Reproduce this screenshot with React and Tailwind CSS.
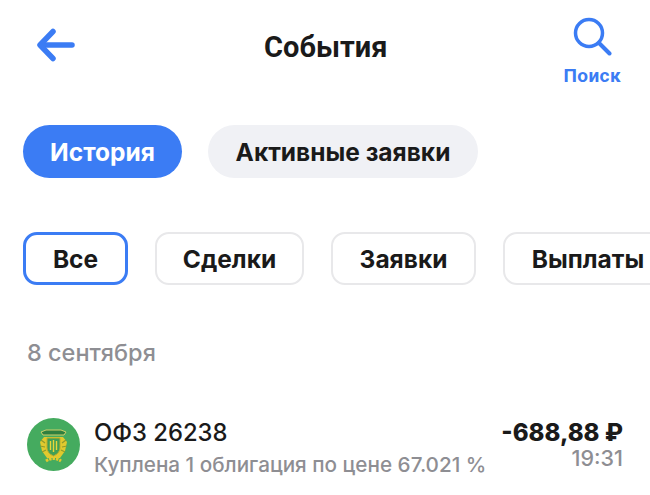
import { useState } from 'react';

const filters = [
  { label: 'Все', width: 'w-[105px]' },
  { label: 'Сделки', width: 'w-[149px]' },
  { label: 'Заявки', width: 'w-[145px]' },
  { label: 'Выплаты', width: 'w-[170px]' },
];

function BondLogo() {
  return (
    <svg width="53" height="53" viewBox="0 0 53 53" className="shrink-0">
      <circle cx="26.5" cy="26.5" r="26.5" fill="#45ab5f" />
      {/* crest */}
      <path d="M14 14 L19 12 H34 L39 14 L37 17 H16 Z" fill="#2f7f3f" stroke="#cfd06a" strokeWidth="1" />
      <path d="M17 19 H36 L40 24 L38 33 L33 40 H20 L15 33 L13 24 Z" fill="#e0c92e" />
      <path d="M14 22 L18 25 M13 28 L18 29 M15 34 L19 32 M39 22 L35 25 M40 28 L35 29 M38 34 L34 32" stroke="#8f9a2c" strokeWidth="1.2" />
      <path d="M20 20 H33 V30 Q33 35 26.5 38 Q20 35 20 30 Z" fill="#3f9f55" stroke="#b9ad2c" strokeWidth="1" />
      <path d="M23.5 23 V32 M26.5 22 V34 M29.5 23 V32" stroke="#e8d63a" strokeWidth="1.4" />
      <path d="M19 43 Q26.5 38 34 43" fill="none" stroke="#e0c92e" strokeWidth="3" strokeDasharray="2.5 1" />
    </svg>
  );
}

export default function App() {
  const [activeFilter, setActiveFilter] = useState('Все');

  return (
    <div className="w-[650px] h-[495px] overflow-hidden bg-white font-['Inter',sans-serif] text-[#1a1a1a]">
      {/* Header */}
      <div className="flex items-start justify-between h-[125px] pl-[36px] pr-[29px]">
        <button className="mt-[28px] text-[#3b7cf4]">
          <svg width="40" height="34" viewBox="0 0 40 34" fill="none" stroke="currentColor" strokeWidth="5.5" strokeLinecap="round" strokeLinejoin="round">
            <path d="M36 17 H5" />
            <path d="M17 3.5 L4 17 L17 30.5" />
          </svg>
        </button>
        <h1 className="mt-[29px] ml-[12px] font-['Roboto',sans-serif] text-[29px] leading-[36px] font-bold">События</h1>
        <button className="mt-[17px] flex flex-col items-center text-[#3b7cf4]">
          <svg width="40" height="39" viewBox="0 0 40 39" fill="none" stroke="currentColor" strokeWidth="3.5" strokeLinecap="round" className="translate-x-[1px]">
            <circle cx="16" cy="16" r="13.5" />
            <path d="M26 26 L36.5 36.5" strokeWidth="4" />
          </svg>
          <span className="mt-[10px] font-['Roboto',sans-serif] text-[19px] leading-[20px] font-bold tracking-[0.4px]">Поиск</span>
        </button>
      </div>

      {/* Tabs */}
      <div className="flex gap-[26px] pl-[23px]">
        <div className="flex items-center justify-center w-[159px] h-[53px] pt-[2px] rounded-full bg-[#3b7cf4] text-white text-[24.5px] font-bold">История</div>
        <div className="flex items-center justify-center w-[270px] h-[53px] pt-[2px] rounded-full bg-[#f0f1f5] text-[24.5px] font-bold">Активные заявки</div>
      </div>

      {/* Filters */}
      <div className="flex gap-[27px] mt-[54px] pl-[23px]">
        {filters.map((f) => (
          <button
            key={f.label}
            onClick={() => setActiveFilter(f.label)}
            className={`flex items-center justify-center shrink-0 h-[53px] pt-[2px] rounded-[14px] text-[24.5px] font-bold ${f.width} ${
              activeFilter === f.label ? 'border-[3px] border-[#3b7cf4]' : 'border-2 border-[#e8e8ea]'
            }`}
          >
            {f.label}
          </button>
        ))}
      </div>

      {/* Date */}
      <div className="mt-[54px] pl-[27px] text-[23.5px] leading-[28px] font-medium text-[#8e8e93]">8 сентября</div>

      {/* Operation row */}
      <div className="flex mt-[51px] pl-[27px] pr-[27px]">
        <BondLogo />
        <div className="ml-[14px] min-w-0">
          <div className="text-[23.8px] leading-[30px] font-medium">ОФЗ 26238</div>
          <div className="mt-[4px] text-[20.7px] leading-[26px] font-medium text-[#8e8e93] whitespace-nowrap">Куплена 1 облигация по цене 67.021 %</div>
        </div>
        <div className="ml-auto flex flex-col items-end pt-[3px]">
          <div className="text-[24px] leading-[24px] font-extrabold whitespace-nowrap">-688,88 ₽</div>
          <div className="mt-[1px] text-[21.5px] leading-[24px] font-medium text-[#8e8e93]">19:31</div>
        </div>
      </div>
    </div>
  );
}
